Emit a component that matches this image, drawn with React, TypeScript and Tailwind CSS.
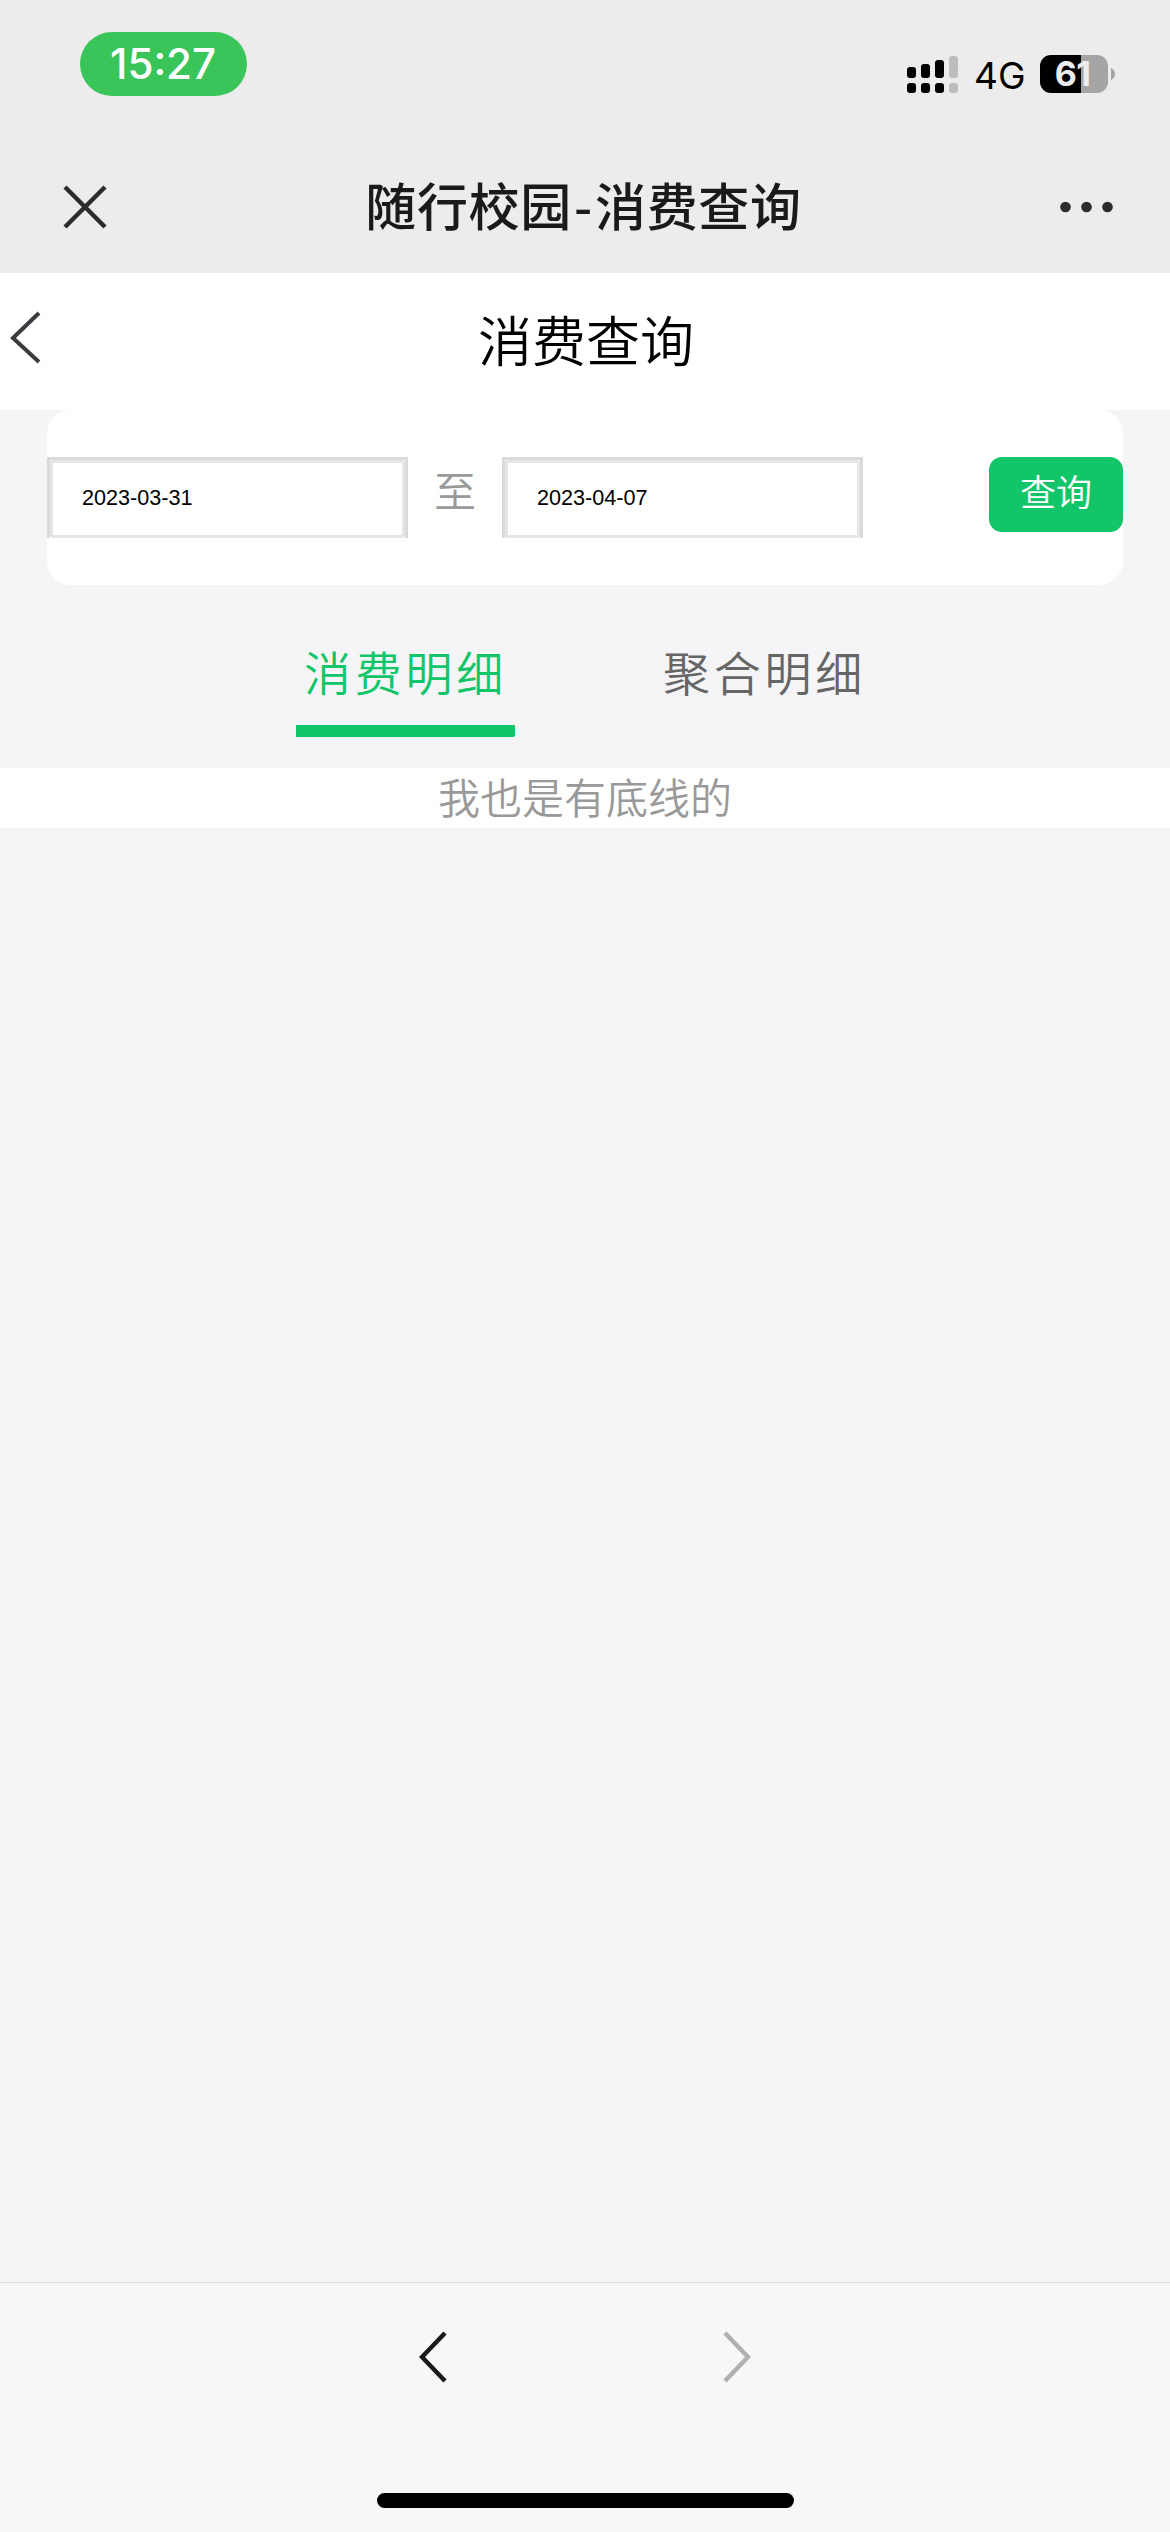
import { useState } from 'react'

const SIGNAL_BARS = [
  { x: 0, top: 11, active: true },
  { x: 14, top: 8, active: true },
  { x: 28, top: 4, active: true },
  { x: 42, top: 0, active: false },
]

const TABS = [
  { id: 'detail', label: '消费明细' },
  { id: 'summary', label: '聚合明细' },
]

function SignalIcon() {
  return (
    <svg width="51" height="38" viewBox="0 0 51 38">
      {SIGNAL_BARS.map(({ x, top, active }) => (
        <g key={x} fill={active ? '#000' : '#bdbdbd'}>
          <rect x={x} y={top + 1} width="9" height={22 - top} rx="3" />
          <rect x={x} y="28" width="9" height="10" rx="3" />
        </g>
      ))}
    </svg>
  )
}

function Battery({ level }: { level: number }) {
  return (
    <div className="flex items-center gap-[3px]">
      <div className="flex h-[38px] w-[68px] items-center justify-center rounded-[11px] bg-linear-to-r from-black from-60% to-[#a5a5a5] to-60% pr-[3px] text-[34px] leading-none font-bold tracking-[-0.5px] text-[#ececec]">
        {level}
      </div>
      <svg width="4" height="12" viewBox="0 0 4 12">
        <path d="M0 0c2.500 1 4 3.500 4 6s-1.500 5-4 6z" fill="#a5a5a5" />
      </svg>
    </div>
  )
}

function StatusBar() {
  return (
    <div className="flex h-[142px] justify-between pt-8 pr-[55px] pl-20">
      <div className="flex h-16 w-[167px] items-center justify-center rounded-full bg-[#3ac55a] pr-[1px] text-[42px] leading-none font-medium text-white">
        15:27
      </div>
      <div className="mt-[23px] flex h-[38px] items-center">
        <SignalIcon />
        <span className="ml-[16px] w-[66px] pt-0.5 text-[37px] leading-none">4G</span>
        <Battery level={61} />
      </div>
    </div>
  )
}

function NavBar() {
  return (
    <div className="flex h-[131px] items-center justify-between pr-[57px] pb-0.5 pl-[63px]">
      <svg width="44" height="44" viewBox="0 0 44 44" stroke="#2c2c2c" strokeWidth="4.500">
        <path d="M2 2l40 40M42 2L2 42" />
      </svg>
      <h1 className="pb-1 font-['Noto_Sans_CJK_SC',sans-serif] text-[51px] leading-none font-medium tracking-[0.7px] text-[#1a1a1a]">
        随行校园<span className="mx-[2px]">-</span>消费查询
      </h1>
      <svg width="53" height="12" viewBox="0 0 53 12" fill="#2c2c2c">
        <circle cx="5.500" cy="6" r="5.300" />
        <circle cx="26.500" cy="6" r="5.300" />
        <circle cx="47.500" cy="6" r="5.300" />
      </svg>
    </div>
  )
}

function DateInput({ value }: { value: string }) {
  return (
    <div className="h-[81px] w-[361px] border-3 border-b-0 border-[#dadada]">
      <div className="flex h-full items-center rounded-[3px] border-3 border-[#e5e5e5] pb-0.5 pl-[29px] font-['Liberation_Sans',sans-serif] text-[21.600px] leading-none font-normal text-black">
        {value}
      </div>
    </div>
  )
}

function QueryCard() {
  return (
    <div className="mx-[47px] flex h-[175px] items-start rounded-3xl bg-white pt-[47px]">
      <DateInput value="2023-03-31" />
      <span className="w-[94px] pt-[11px] text-center text-[42px] leading-none text-[#999]">至</span>
      <DateInput value="2023-04-07" />
      <button className="ml-auto h-[75px] w-[134px] rounded-[13px] bg-[#13c569] pb-[9px] text-[36px] leading-none text-white">
        查询
      </button>
    </div>
  )
}

export default function App() {
  const [tab, setTab] = useState('detail')

  return (
    <div className="flex h-[2532px] w-[1170px] flex-col bg-[#f5f5f8] font-['Noto_Sans_CJK_SC',sans-serif] font-[350]">
      <header className="bg-[#ececec] font-[Inter,sans-serif] font-normal text-black">
        <StatusBar />
        <NavBar />
      </header>

      <div className="grid h-[137px] grid-cols-3 items-center bg-white">
        <svg width="32" height="54" viewBox="0 0 32 54" className="mb-2 ml-[10px]" fill="none" stroke="#3c3c40" strokeWidth="4">
          <path d="M29 2L3 27l26 24" />
        </svg>
        <h2 className="pb-[5px] pl-0.5 text-center text-[54px] leading-none font-[350] text-black">消费查询</h2>
      </div>

      <QueryCard />

      <div className="flex h-[152px] items-start justify-center gap-[140px] pt-[62px]">
        {TABS.map(({ id, label }) => (
          <button
            key={id}
            onClick={() => setTab(id)}
            className={
              tab === id
                ? 'h-[90px] w-[219px] rounded-r-[2px] border-b-12 border-[#13c569] pb-[33px] text-[47px] leading-none tracking-[3.800px] text-[#13c569]'
                : 'h-[90px] w-[219px] border-b-12 border-transparent pb-[33px] text-[47px] leading-none tracking-[3.800px] text-[#666]'
            }
          >
            {label}
          </button>
        ))}
      </div>

      <div className="mt-[31px] flex h-[60px] items-center justify-center bg-white pb-1 text-[42px] leading-none text-[#999]">
        我也是有底线的
      </div>

      <footer className="mt-auto flex h-[250px] flex-col items-center justify-between border-t border-[#dcdcdc] bg-[#f7f7f7] pt-12 pb-6">
        <div className="flex gap-[276px]">
          <svg width="28" height="52" viewBox="0 0 28 52" fill="none" stroke="#1a1a1a" strokeWidth="4.500">
            <path d="M26 2L3 26l23 24" />
          </svg>
          <svg width="28" height="52" viewBox="0 0 28 52" fill="none" stroke="#b0b0b0" strokeWidth="4.500">
            <path d="M2 2l23 24L2 50" />
          </svg>
        </div>
        <div className="h-[15px] w-[417px] rounded-full bg-black" />
      </footer>
    </div>
  )
}
